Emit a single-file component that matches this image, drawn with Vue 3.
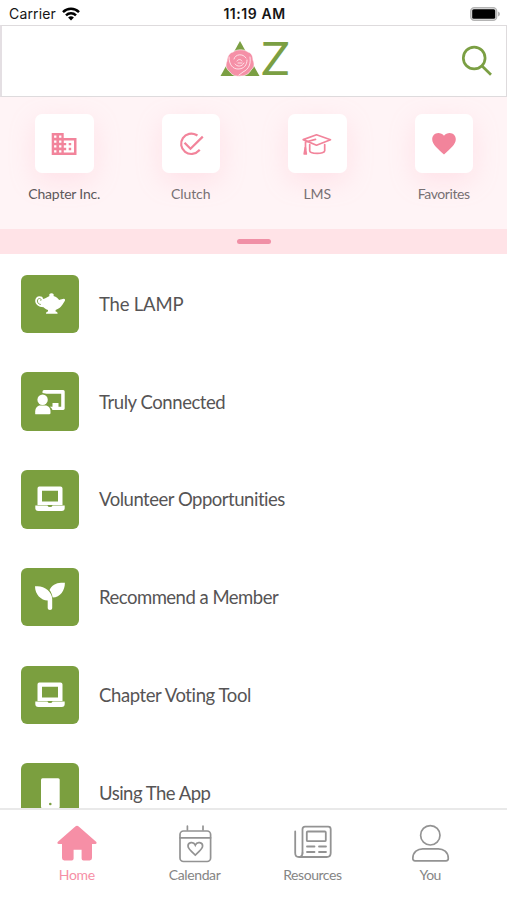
<template>
  <div class="screen">
    <div class="status-bar">
      <div class="status-left">
        <span class="carrier">Carrier</span>
        <svg class="wifi" viewBox="0 0 18 14" fill="none" stroke="#000" stroke-width="2.5">
          <path d="M1 5.1a11.4 11.4 0 0 1 16 0" />
          <path d="M4 8.3a7.2 7.2 0 0 1 10 0" />
          <path d="M9 13.6 6.1 10.6a4.1 4.1 0 0 1 5.8 0z" fill="#000" stroke="none" />
        </svg>
      </div>
      <span class="clock">11:19 AM</span>
      <svg class="battery" viewBox="0 0 30 14">
        <rect x=".7" y=".7" width="26" height="12.6" rx="3.6" fill="#ddd" stroke="#b4b4b4" stroke-width="1.3" />
        <rect x="2.2" y="2.2" width="23" height="9.6" rx="1.6" fill="#000" />
        <path d="M28 4.6q2 .8 2 2.4t-2 2.4z" fill="#b4b4b4" />
      </svg>
    </div>

    <header class="header">
      <div class="logo">
        <svg class="logo-mark" viewBox="0 0 40 38">
          <path d="M20 1 39.5 36H.5z" fill="#7b9f43" />
          <path
            d="M13 12c4-3 11-3 15 0 4 1 5 5 5 8 2 4 1 8-2 10-2 4-6 6-10 6-5 1-9-1-11-4-4-3-5-7-3-11 0-4 2-8 6-9z"
            fill="#f590a7"
            stroke="#fff"
            stroke-width=".6"
          />
          <g fill="none" stroke="#ffe9ee" stroke-width=".9" stroke-linecap="round">
            <path d="M9 17c0 8 4 12 9 12 6 0 9-4 9-9" />
            <path d="M14 19c1-5 9-6 12-1M15 24c2 3 7 3 9-1" />
            <path d="M17 21c1-2 4-2 5 0M18 23h4" />
            <path d="M30 17c1 7-1 12-7 15l-4 3" />
          </g>
        </svg>
        <span class="logo-letter">Z</span>
      </div>
      <svg class="search" viewBox="0 0 32 32" fill="none" stroke="#7b9f43" stroke-width="2.7">
        <circle cx="13.2" cy="13" r="10.9" />
        <path d="m20.8 20.8 9.2 9" />
      </svg>
    </header>

    <section class="shortcuts">
      <div v-for="item in shortcuts" :key="item.label" class="shortcut">
        <div class="shortcut-tile">
          <svg class="shortcut-icon" viewBox="0 0 30 30" v-html="item.icon"></svg>
        </div>
        <span :style="{ letterSpacing: item.spacing + 'px' }">{{ item.label }}</span>
      </div>
    </section>
    <div class="drawer-handle"><i></i></div>

    <main class="list">
      <div v-for="item in items" :key="item.label" class="row">
        <div class="row-tile">
          <svg class="row-icon" viewBox="0 0 30 30" v-html="item.icon"></svg>
        </div>
        <span :style="{ letterSpacing: item.spacing + 'px' }">{{ item.label }}</span>
      </div>
    </main>

    <nav class="tabs">
      <div v-for="tab in tabs" :key="tab.label" class="tab" :class="{ active: tab.active }">
        <svg class="tab-icon" viewBox="0 0 40 40" v-html="tab.icon"></svg>
        <span :style="{ letterSpacing: tab.spacing + 'px' }">{{ tab.label }}</span>
      </div>
    </nav>
  </div>
</template>

<script setup>
const laptop = `
  <path d="M4.3 2.500h21.200a2 2 0 0 1 2 2V21h-25V4.500a2 2 0 0 1 1.800-2zM7 6.700v10.800h16V6.700z" fill="#fff" fill-rule="evenodd"/>
  <path d="M.3 21.400h12.200q.3 1.500 2.500 1.500t2.500-1.500h12.200v2.600a3 3 0 0 1-3 3H3.300a3 3 0 0 1-3-3z" fill="#fff"/>`

const shortcuts = [
  {
    label: 'Chapter Inc.',
    spacing: -0.2,
    icon: `<path d="M2.700 4h12v5h12.800v17H2.700z" fill="#f2849b"/>
      <path d="M5.100 6.500h2.300v2.300H5.100zm5 0h2.300v2.300h-2.300zm-5 4.900h2.300v2.300H5.100zm5 0h2.300v2.300h-2.300zm-5 4.900h2.300v2.300H5.100zm5 0h2.300v2.300h-2.300zm-5 4.900h2.300v2.300H5.100zm5 0h2.300v2.300h-2.300zM14.800 11.400H25v12.200H14.800v-2.400h2.400v-2.400h-2.400v-2.500h2.400v-2.400h-2.400z" fill="#fff"/>
      <path d="M19.700 13.900h2.500v2.400h-2.500zm0 4.900h2.500v2.400h-2.500z" fill="#f2849b"/>`
  },
  {
    label: 'Clutch',
    spacing: -0.1,
    icon: `<g fill="none" stroke="#f2849b" stroke-width="2.200" stroke-linecap="square">
      <path d="M20.500 6A10.200 10.200 0 1 0 23 21.500"/>
      <path d="m9.300 14.500 5.200 5.300L26 8.400"/></g>`
  },
  {
    label: 'LMS',
    spacing: -0.1,
    icon: `<g fill="none" stroke="#f2849b" stroke-width="1.700" stroke-linejoin="round" stroke-linecap="round">
      <path d="M1.200 10.600 14.500 5.800l14 4.900-14 5.500z"/>
      <path d="M13.500 10.400 3.500 13v7.500"/>
      <path d="M3.300 18.500 2.200 25h2.100z" fill="#f2849b"/>
      <path d="M7.700 15.500v6.300c0 3.500 15 3.500 15 0v-6.200"/></g>`
  },
  {
    label: 'Favorites',
    spacing: -0.4,
    icon: '<path d="M15 25.500C9 20 3.200 15.600 3.200 10.300 3.200 6.800 5.900 4 9.300 4c2.200 0 4.400 1 5.700 2.800C16.300 5 18.500 4 20.700 4c3.400 0 6.100 2.800 6.100 6.300C26.800 15.600 21 20 15 25.500z" fill="#f2849b"/>'
  }
]

const items = [
  {
    label: 'The LAMP',
    spacing: -0.2,
    icon: `<path d="M8 10c3-.2 3.600-1.800 6.500-3-.9-1.700.4-2.800 2-2.800s2.900 1.100 2 2.800c3 1 4.700 2.600 5.700 4 2.200-.4 3-1.200 4.700-1.200 1.300.2 1.500 1.300.7 2.500-2.600 4.500-4.500 7-9 8.700v1.500c1.500.2 2 .8 2 2.300H11c0-1.500.6-2 2-2.300V21c-2-.6-3.500-1.500-4.500-2.700-5 0-8.300-3-8.300-6.500C.2 9.300 2.100 7.300 4.500 7.300 6.500 7.300 8 8 8 10z" fill="#fff"/>
      <path d="M5.800 15.500c-2.300-.3-3.400-1.800-3.400-3.500s1-2.500 2.200-2.500c1.500 0 2 1.600.9 2.300" fill="none" stroke="#7b9f43" stroke-width=".9"/>`
  },
  {
    label: 'Truly Connected',
    spacing: -0.43,
    icon: `<path d="M7.500 6V4.500Q7.500 3 9 3h19.200q1.500 0 1.500 1.500v17q0 1.400-1.500 1.400H17.500a6.500 6.500 0 0 0-2.700-3.200h2.700V16h6v3.700h2.700V6.700H11.500" fill="#fff"/>
      <circle cx="7.600" cy="12.700" r="5.200" fill="#fff"/>
      <path d="M.2 27v-2.500c0-3.500 2.300-5.900 5-5.900h5c3 0 5.300 2.200 5.300 5.900V26q0 1.300-1.300 1.300H1.500Q.2 27.300.2 27z" fill="#fff"/>`
  },
  { label: 'Volunteer Opportunities', spacing: -0.48, icon: laptop },
  {
    label: 'Recommend a Member',
    spacing: -0.5,
    icon: `<path d="M0 4.300h2.500c7.500 0 14.700 6 14.700 12.700v9.200q0 1.800-2.200 1.800t-2.300-1.800V18.500C6 18.500 0 12.500 0 4.300z" fill="#fff"/>
      <path d="M29.900.7c0 8-4.500 14.300-12.200 14.900-.5-2.800-1.600-5.500-3.200-7.500C16.500 3.500 21 .7 26 .7z" fill="#fff"/>`
  },
  { label: 'Chapter Voting Tool', spacing: -0.4, icon: laptop },
  {
    label: 'Using The App',
    spacing: -0.5,
    icon: `<rect x="6" y=".2" width="18.700" height="30" rx="1.500" fill="#fff"/>
      <circle cx="15.300" cy="26" r="1.300" fill="#7b9f43"/>`
  }
]

const tabs = [
  {
    label: 'Home',
    spacing: -0.3,
    active: true,
    icon: '<path d="M20 .8q1 0 1.700.8l17.400 15.200c1 .9.500 2.300-.8 2.300h-3.300v14q0 2.300-2.300 2.300h-6.200q-1.900 0-1.900-1.900v-8.700h-8v8.700q0 1.900-1.900 1.900H7.300Q5 35.400 5 33.100v-14H1.700c-1.300 0-1.800-1.400-.8-2.300L18.300 1.600Q19 .8 20 .8z" fill="#f68fa6"/>'
  },
  {
    label: 'Calendar',
    spacing: -0.4,
    icon: `<g fill="none" stroke="#939393" stroke-width="1.700" stroke-linecap="round">
      <rect x="5" y="6" width="30.600" height="30.500" rx="3.500"/>
      <path d="M5 12.800h30.600M12.400 5V1.200M28 5V1.200"/>
      <path d="M20.300 30c-4-3.500-7.300-6-7.300-8.900 0-3.800 5.500-4.900 7.300-1 1.800-3.900 7.300-2.800 7.300 1 0 2.900-3.300 5.400-7.300 8.900z"/></g>`
  },
  {
    label: 'Resources',
    spacing: -0.45,
    icon: `<g fill="none" stroke="#939393" stroke-width="1.800" stroke-linecap="round">
      <path d="M10.500 28V4.200q0-2.500 2.500-2.500h23.200q2.500 0 2.500 2.500V28q0 4-4 4H7q-3.800 0-3.800-4V6.500"/>
      <path d="M10.500 28q0 3-2.500 4"/>
      <rect x="14.800" y="6.500" width="19" height="9.700" rx="1"/>
      <path d="M15 21.500h7.500M27 21.500h7M15 27h7.500M27 27h7"/></g>`
  },
  {
    label: 'You',
    spacing: -0.6,
    icon: `<g fill="none" stroke="#939393" stroke-width="1.700">
      <circle cx="20.300" cy="10.300" r="9.700"/>
      <path d="M2.800 33.500c0-6.500 5-9.700 10-9.700h15.500c5 0 10 3.200 10 9.700q0 2.300-2.300 2.300H5q-2.200 0-2.200-2.300z"/></g>`
  }
]
</script>

<style>
body {
  margin: 0;
  background: #fff;
}
</style>

<style scoped>
.screen {
  width: 507px;
  height: 900px;
  display: flex;
  flex-direction: column;
  overflow: hidden;
  background: #fff;
  color: #565455;
  font-family: Lato, "Liberation Sans", sans-serif;
}

svg {
  display: block;
  overflow: visible;
}

.status-bar {
  height: 25px;
  flex: none;
  display: grid;
  grid-template-columns: 1fr auto 1fr;
  align-items: center;
  padding: 2px 7px 0 9px;
  box-sizing: border-box;
  color: #151515;
  font-family: Inter, "Liberation Sans", sans-serif;
  font-size: 14px;
}

.status-left {
  display: flex;
  align-items: center;
  gap: 6px;
}

.carrier {
  letter-spacing: 0.15px;
}

.wifi {
  width: 18px;
  height: 14px;
}

.clock {
  font-weight: 600;
  letter-spacing: 0.55px;
}

.battery {
  width: 30px;
  height: 14px;
  justify-self: end;
}

.header {
  height: 72px;
  flex: none;
  box-sizing: border-box;
  display: grid;
  grid-template-columns: 1fr auto 1fr;
  align-items: center;
  border: 1px solid #dedbdd;
  border-left: 2px solid #e4dfe3;
  padding-right: 13px;
}

.logo {
  grid-column: 2;
  display: flex;
  align-items: center;
  gap: 1px;
  height: 70px;
  margin-left: 15px;
}

.logo-mark {
  width: 40px;
  height: 38px;
  margin-bottom: 5px;
}

.logo-letter {
  color: #7b9f43;
  font-size: 47px;
  line-height: 62px;
  height: 70px;
}

.search {
  width: 32px;
  height: 32px;
  justify-self: end;
}

.shortcuts {
  height: 132px;
  flex: none;
  display: grid;
  grid-template-columns: repeat(4, 1fr);
  box-sizing: border-box;
  padding: 17px 0 0 1px;
  background: #fff4f6;
}

.shortcut {
  display: flex;
  flex-direction: column;
  align-items: center;
  gap: 12px;
  font-size: 14px;
  line-height: 18px;
  white-space: nowrap;
  color: #777073;
}

.shortcut:first-child {
  color: #5d585b;
}

.shortcut-tile {
  width: 58.5px;
  height: 59px;
  border-radius: 7px;
  background: #fff;
  box-shadow: 0 8px 26px rgba(255, 170, 190, 0.25);
  display: grid;
  place-items: center;
}

.shortcut-icon {
  width: 30px;
  height: 30px;
}

.drawer-handle {
  height: 25px;
  flex: none;
  display: grid;
  place-items: center;
  background: #ffe3e7;
}

.drawer-handle i {
  width: 34px;
  height: 5px;
  border-radius: 3px;
  background: #f090a6;
}

.list {
  flex: 1;
  min-height: 0;
  overflow: hidden;
  box-sizing: border-box;
  padding: 20.5px 20.5px 0;
}

.row {
  display: flex;
  align-items: center;
  gap: 20px;
  margin-bottom: 39.25px;
  font-size: 18.5px;
  line-height: 24px;
  white-space: nowrap;
}

.row-tile {
  width: 58.5px;
  height: 58.5px;
  border-radius: 6px;
  background: #7b9f3f;
  display: grid;
  place-items: center;
}

.row-icon {
  width: 30px;
  height: 30px;
}

.tabs {
  height: 92px;
  flex: none;
  box-sizing: border-box;
  display: grid;
  grid-template-columns: repeat(4, 1fr);
  padding: 15px 18px 0;
  border-top: 2px solid #e9e9e9;
  background: #fff;
}

.tab {
  display: flex;
  flex-direction: column;
  align-items: center;
  gap: 1px;
  font-size: 14px;
  line-height: 18px;
  color: #858585;
}

.tab-icon {
  width: 40px;
  height: 40px;
}

.active {
  color: #f68fa6;
}
</style>
